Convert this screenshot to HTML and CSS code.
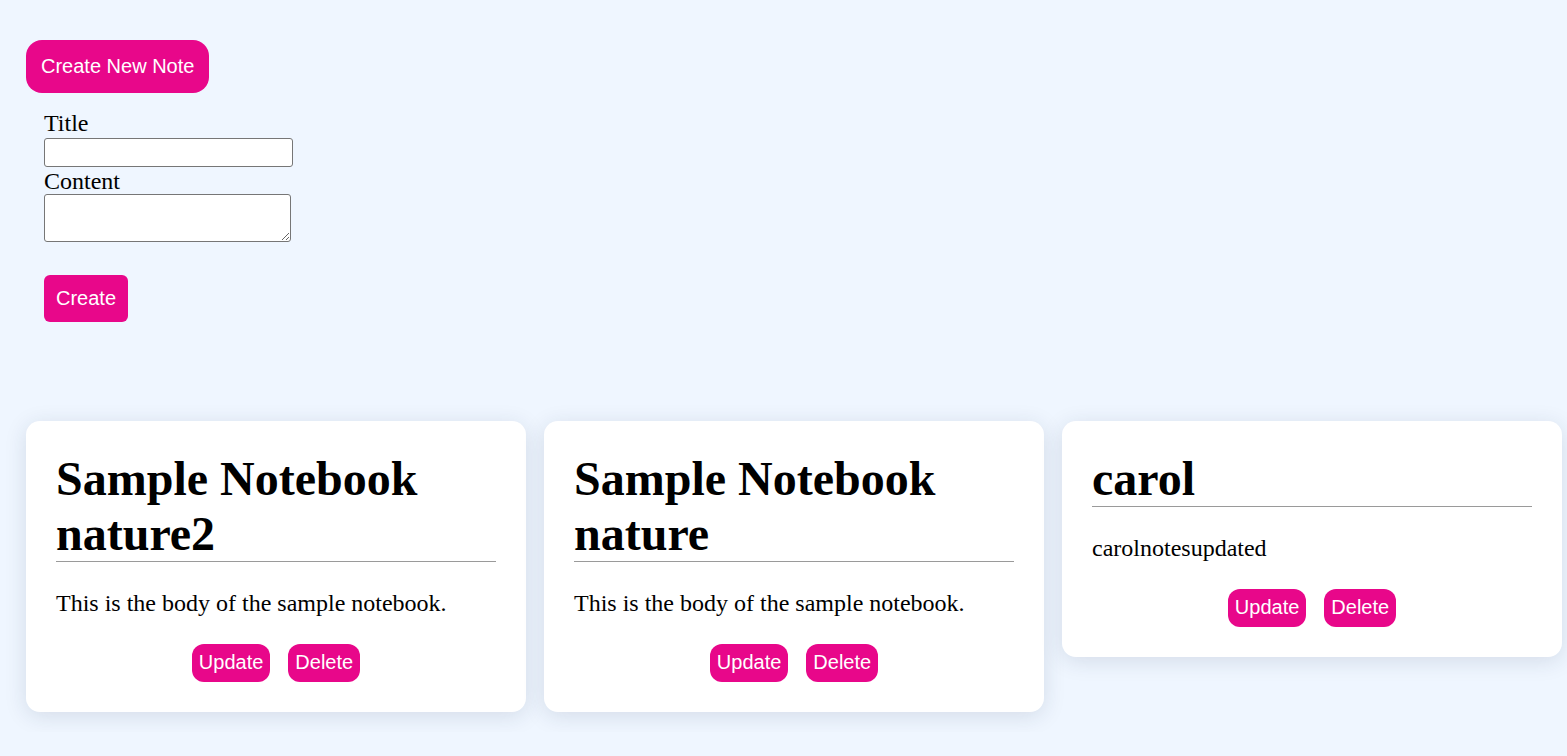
FILE: index.html
```html
<!DOCTYPE html>
<html lang="en">
<head>
<meta charset="utf-8">
<title>Notes</title>
<link rel="stylesheet" href="styles.css">
</head>
<body>
<div class="app">
  <div class="top">
    <button class="btn btn-new">Create New Note</button>
  </div>
  <form class="note-form">
    <label class="field-label" for="title">Title</label>
    <input class="field-input" id="title" type="text">
    <label class="field-label" for="content">Content</label>
    <textarea class="field-area" id="content"></textarea>
    <button type="button" class="btn btn-create">Create</button>
  </form>
  <div class="notes">
    <div class="card">
      <h1 class="card-title">Sample Notebook nature2</h1>
      <p class="card-body">This is the body of the sample notebook.</p>
      <div class="card-actions">
        <button class="btn btn-small">Update</button>
        <button class="btn btn-small">Delete</button>
      </div>
    </div>
    <div class="card">
      <h1 class="card-title">Sample Notebook nature</h1>
      <p class="card-body">This is the body of the sample notebook.</p>
      <div class="card-actions">
        <button class="btn btn-small">Update</button>
        <button class="btn btn-small">Delete</button>
      </div>
    </div>
    <div class="card">
      <h1 class="card-title">carol</h1>
      <p class="card-body">carolnotesupdated</p>
      <div class="card-actions">
        <button class="btn btn-small">Update</button>
        <button class="btn btn-small">Delete</button>
      </div>
    </div>
  </div>
</div>
</body>
</html>
```

FILE: styles.css
```css
html, body {
  margin: 0;
  padding: 0;
  background: #eff6ff;
}

body {
  font-family: "Liberation Serif", "Times New Roman", serif;
  color: #000;
}

.app {
  padding: 40px 26px 20px;
}

.top {
  display: flex;
}

.btn {
  background: #e8078a;
  color: #fff;
  border: none;
  font-family: "Liberation Sans", Arial, sans-serif;
  font-size: 20px;
  line-height: 23px;
  cursor: pointer;
}

.btn-new {
  padding: 15px;
  border-radius: 16px;
}

.note-form {
  display: flex;
  flex-direction: column;
  align-items: flex-start;
  padding: 16px 18px 0;
  margin: 0;
}

.field-label {
  display: block;
  font-size: 24px;
  line-height: 27.6px;
  padding-top: 1px;
}

.field-input {
  box-sizing: border-box;
  width: 249px;
  height: 29px;
  margin: 0;
  border: 1px solid #767676;
  border-radius: 3px;
  background: #fff;
  font-size: 16px;
}

.field-area {
  box-sizing: border-box;
  width: 247px;
  height: 48px;
  margin: -1px 0 0;
  border: 1px solid #767676;
  border-radius: 3px;
  background: #fff;
  font-size: 16px;
}

.btn-create {
  margin-top: 33px;
  padding: 12px;
  border-radius: 6px;
}

.notes {
  display: flex;
  align-items: flex-start;
  gap: 18px;
  margin-top: 99px;
}

.card {
  box-sizing: border-box;
  width: 500px;
  flex: 0 0 500px;
  background: #fff;
  border-radius: 14px;
  padding: 30px;
  box-shadow: 0 4px 22px rgba(30, 50, 80, 0.13);
}

.card-title {
  margin: 0;
  font-size: 48px;
  line-height: 55px;
  font-weight: bold;
  border-bottom: 1px solid #9a9a9a;
}

.card-body {
  margin: 27px 0 27px;
  font-size: 24px;
  line-height: 28px;
}

.card-actions {
  display: flex;
  justify-content: center;
  gap: 18px;
}

.btn-small {
  padding: 7px 7px 8px;
  border-radius: 12px;
}
```
